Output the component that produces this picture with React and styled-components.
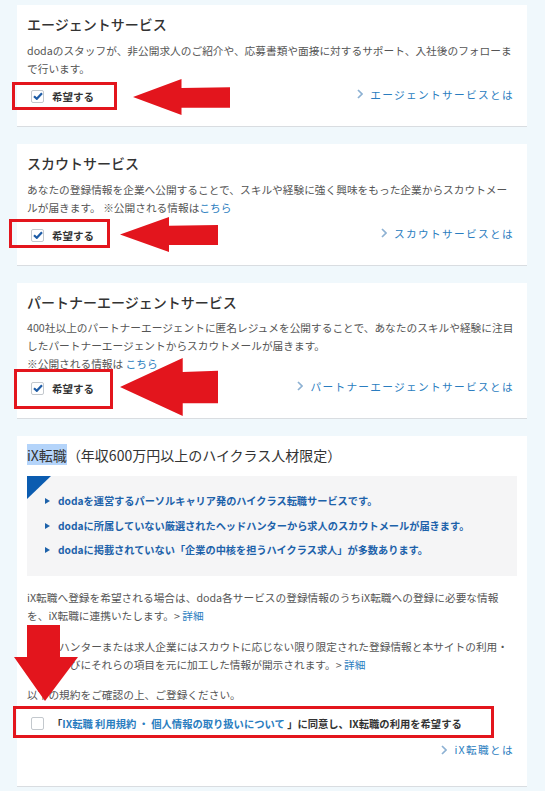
import React from "react";
import styled, { createGlobalStyle } from "styled-components";

const GlobalStyle = createGlobalStyle`
  html, body {
    margin: 0;
    padding: 0;
    background: #f0f8fc;
  }
  body {
    font-family: "Noto Sans CJK JP", "Noto Sans", sans-serif;
    color: #333;
  }
`;

const Page = styled.div`
  width: 545px;
  height: 791px;
  overflow: hidden;
  box-sizing: border-box;
  padding: 5px 18px 0 17px;
  display: flex;
  flex-direction: column;
  gap: 17px;
`;

const Card = styled.section`
  position: relative;
  flex-shrink: 0;
  background: #fff;
  border-bottom: 1px solid #d9dde1;
  padding: 9px 10px ${(p) => p.$bottom ?? 20}px;
`;

const Title = styled.h2`
  margin: 0;
  font-size: 14px;
  line-height: 20px;
  font-weight: ${(p) => (p.$plain ? 400 : 500)};
  color: #333;
`;

const Highlight = styled.span`
  background: #b4d4fa;
  padding: 1px 0 0;
`;

const Desc = styled.p`
  margin: ${(p) => p.$top ?? 8}px 0 0;
  font-size: 10.7px;
  line-height: 18px;
  color: #555;
`;

const TextLink = styled.a`
  color: #2a7dc0;
  text-decoration: none;
`;

const Row = styled.div`
  margin-top: ${(p) => p.$top ?? 8}px;
  height: 20px;
  display: flex;
  align-items: center;
  justify-content: space-between;
`;

const CheckLabel = styled.label`
  display: flex;
  align-items: center;
  gap: 8px;
  padding-left: 4px;
  font-size: 10.5px;
  font-weight: 700;
  color: #333;
`;

const Box = styled.span`
  width: 13px;
  height: 13px;
  box-sizing: border-box;
  border: 1px solid #c3c8cd;
  border-radius: 2px;
  background: #fff;
  display: inline-flex;
  align-items: center;
  justify-content: center;
  flex-shrink: 0;
`;

const MoreLink = styled.a`
  display: flex;
  align-items: center;
  gap: 7px;
  margin: -4px 3px 0 0;
  font-size: 10.7px;
  letter-spacing: 1.3px;
  color: #2a7dc0;
  text-decoration: none;
`;

const LinkRow = styled.div`
  margin-top: 9px;
  height: 18px;
  display: flex;
  align-items: center;
  justify-content: flex-end;
`;

const Feature = styled.div`
  position: relative;
  margin-top: 11px;
  background: #f5f5f6;
  padding: 13px 0 13px;
  overflow: hidden;

  &::before {
    content: "";
    position: absolute;
    left: 0;
    top: 0;
    border-top: 23px solid #0b5cb0;
    border-right: 24px solid transparent;
  }
`;

const Bullets = styled.ul`
  list-style: none;
  margin: 0;
  padding: 0;
`;

const Bullet = styled.li`
  position: relative;
  padding-left: 31px;
  font-size: 10.2px;
  line-height: 24.5px;
  font-weight: 700;
  color: #1d62aa;

  &::before {
    content: "";
    position: absolute;
    left: 18px;
    top: 9px;
    border-left: 5px solid #1d62aa;
    border-top: 3px solid transparent;
    border-bottom: 3px solid transparent;
  }
`;

const AgreeText = styled.span`
  font-size: 10.3px;
  font-weight: 700;
  color: #333;
  white-space: nowrap;
`;

const Frame = styled.div`
  position: absolute;
  left: ${(p) => p.$x}px;
  top: ${(p) => p.$y}px;
  width: ${(p) => p.$w}px;
  height: ${(p) => p.$h}px;
  box-sizing: border-box;
  border: 3px solid #e3151d;
  pointer-events: none;
`;

const ArrowSvg = styled.svg`
  position: absolute;
  left: ${(p) => p.$x}px;
  top: ${(p) => p.$y}px;
  pointer-events: none;
`;

const Check = () => (
  <svg width="10" height="8" viewBox="0 0 10 8">
    <path d="M1 4.2 L3.8 6.8 L9 1.2" fill="none" stroke="#1e5ca6" strokeWidth="2.2" />
  </svg>
);

const Chevron = () => (
  <svg width="6" height="10" viewBox="0 0 6 10">
    <path d="M1 1 L5 5 L1 9" fill="none" stroke="#8db1d3" strokeWidth="1.7" />
  </svg>
);

// head: share of the width taken by the head; shaft: top and bottom of the shaft (0..1)
const LeftArrow = ({ x, y, w, h, head = 0.5, shaft = [0.25, 0.8] }) => {
  const hx = head * 100;
  const s1 = shaft[0] * 100;
  const s2 = shaft[1] * 100;
  return (
    <ArrowSvg $x={x} $y={y} width={w} height={h} viewBox="0 0 100 100" preserveAspectRatio="none">
      <polygon points={`0,50 ${hx},0 ${hx},${s1} 100,${s1 - 2} 100,${s2} ${hx},${s2} ${hx},100`} fill="#e3151d" />
    </ArrowSvg>
  );
};

const DownArrow = ({ x, y, w, h }) => (
  <ArrowSvg $x={x} $y={y} width={w} height={h} viewBox="0 0 64 76" preserveAspectRatio="none">
    <polygon points="13,0 46,0 46,32 64,32 31,76 0,32 13,32" fill="#e3151d" />
  </ArrowSvg>
);

const Wish = ({ checked }) => (
  <CheckLabel>
    <Box>{checked && <Check />}</Box>
    希望する
  </CheckLabel>
);

const More = ({ children }) => (
  <MoreLink href="#">
    <Chevron />
    {children}
  </MoreLink>
);

export default function App() {
  return (
    <>
      <GlobalStyle />
      <Page>
        <Card>
          <Title>エージェントサービス</Title>
          <Desc>
            dodaのスタッフが、非公開求人のご紹介や、応募書類や面接に対するサポート、入社後のフォローまで行います。
          </Desc>
          <Row>
            <Wish checked />
            <More>エージェントサービスとは</More>
          </Row>
          <Frame $x={-5} $y={77} $w={105} $h={28} />
          <LeftArrow x={116} y={74} w={97} h={36} />
        </Card>

        <Card>
          <Title>スカウトサービス</Title>
          <Desc>
            あなたの登録情報を企業へ公開することで、スキルや経験に強く興味をもった企業からスカウトメールが届きます。 ※公開される情報は
            <TextLink href="#">こちら</TextLink>
          </Desc>
          <Row>
            <Wish checked />
            <More>スカウトサービスとは</More>
          </Row>
          <Frame $x={-8} $y={75} $w={101} $h={29} />
          <LeftArrow x={103} y={73} w={98} h={35} />
        </Card>

        <Card>
          <Title>パートナーエージェントサービス</Title>
          <Desc $top={7}>
            400社以上のパートナーエージェントに匿名レジュメを公開することで、あなたのスキルや経験に注目したパートナーエージェントからスカウトメールが届きます。
            <br />
            ※公開される情報は <TextLink href="#">こちら</TextLink>
          </Desc>
          <Row $top={5}>
            <Wish checked />
            <More>パートナーエージェントサービスとは</More>
          </Row>
          <Frame $x={-3} $y={86} $w={99} $h={40} />
          <LeftArrow x={103} y={75} w={98} h={58} head={0.64} shaft={[0.24, 0.78]} />
        </Card>

        <Card $bottom={25}>
          <Title $plain>
            <Highlight>iX転職</Highlight>（年収600万円以上のハイクラス人材限定）
          </Title>
          <Feature>
            <Bullets>
              <Bullet>dodaを運営するパーソルキャリア発のハイクラス転職サービスです。</Bullet>
              <Bullet>dodaに所属していない厳選されたヘッドハンターから求人のスカウトメールが届きます。</Bullet>
              <Bullet>dodaに掲載されていない「企業の中核を担うハイクラス求人」が多数あります。</Bullet>
            </Bullets>
          </Feature>
          <Desc $top={13}>
            iX転職へ登録を希望される場合は、doda各サービスの登録情報のうちiX転職への登録に必要な情報を、iX転職に連携いたします。&gt; <TextLink href="#">詳細</TextLink>
          </Desc>
          <Desc $top={13}>
            ヘッドハンターまたは求人企業にはスカウトに応じない限り限定された登録情報と本サイトの利用・履歴ならびにそれらの項目を元に加工した情報が開示されます。&gt; <TextLink href="#">詳細</TextLink>
          </Desc>
          <Desc $top={12}>以下の規約をご確認の上、ご登録ください。</Desc>
          <Row $top={10}>
            <CheckLabel>
              <Box />
              <AgreeText>
                「<TextLink href="#">IX転職 利用規約 ・ 個人情報の取り扱いについて</TextLink> 」に同意し、IX転職の利用を希望する
              </AgreeText>
            </CheckLabel>
          </Row>
          <LinkRow>
            <More>iX転職とは</More>
          </LinkRow>
          <Frame $x={-4} $y={270} $w={481} $h={32} />
          <DownArrow x={-3} y={189} w={64} h={76} />
        </Card>
      </Page>
    </>
  );
}
